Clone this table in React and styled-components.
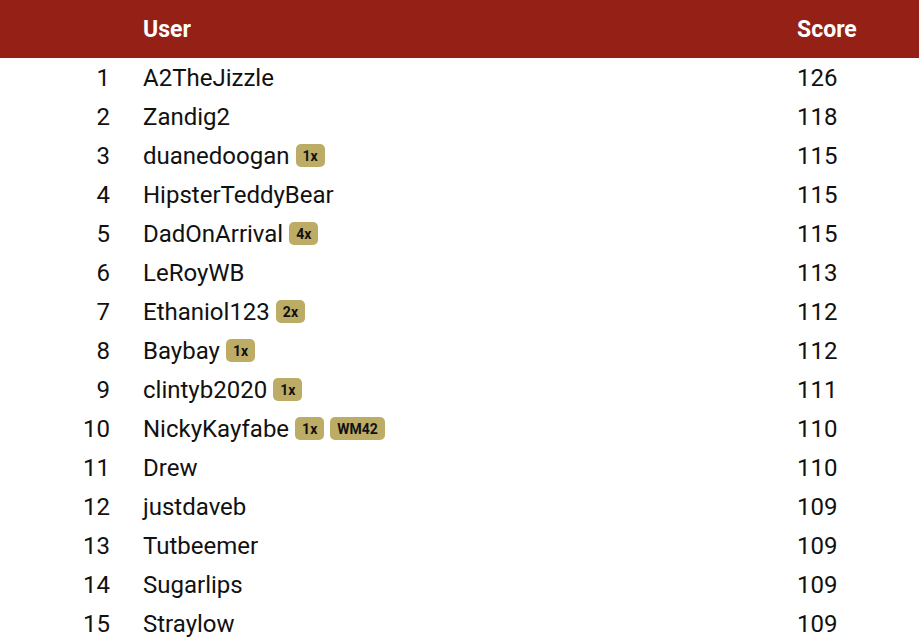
import React from "react";
import styled, { createGlobalStyle } from "styled-components";

const GlobalStyle = createGlobalStyle`
  body {
    margin: 0;
    font-family: Roboto, "Liberation Sans", sans-serif;
    background: #fff;
    color: #111;
  }
`;

const Table = styled.div`
  width: 100%;
`;

const Row = styled.div`
  display: grid;
  grid-template-columns: 111px 1fr 122px;
  column-gap: 32px;
  align-items: center;
  height: ${(p) => (p.head ? "58px" : "39px")};
  background: ${(p) => (p.head ? "#952015" : "transparent")};
  color: ${(p) => (p.head ? "#fff" : "#111")};
  font-size: ${(p) => (p.head ? "23px" : "24px")};
  font-weight: ${(p) => (p.head ? 700 : 400)};
`;

const Rank = styled.div`
  text-align: right;
  padding-right: 1px;
`;

const NameCell = styled.div`
  display: flex;
  align-items: center;
  gap: 6px;
  white-space: nowrap;
`;

const ScoreCell = styled.div``;

const Badge = styled.span`
  display: inline-flex;
  align-items: center;
  height: 23px;
  padding: 0 7px;
  border-radius: 5px;
  background: #bcac66;
  color: #111;
  font-size: 14px;
  font-weight: 700;
`;

const rows = [
  ["A2TheJizzle", 126, []],
  ["Zandig2", 118, []],
  ["duanedoogan", 115, ["1x"]],
  ["HipsterTeddyBear", 115, []],
  ["DadOnArrival", 115, ["4x"]],
  ["LeRoyWB", 113, []],
  ["Ethaniol123", 112, ["2x"]],
  ["Baybay", 112, ["1x"]],
  ["clintyb2020", 111, ["1x"]],
  ["NickyKayfabe", 110, ["1x", "WM42"]],
  ["Drew", 110, []],
  ["justdaveb", 109, []],
  ["Tutbeemer", 109, []],
  ["Sugarlips", 109, []],
  ["Straylow", 109, []],
];

export default function App() {
  return (
    <>
      <GlobalStyle />
      <Table>
        <Row head>
          <Rank />
          <NameCell>User</NameCell>
          <ScoreCell>Score</ScoreCell>
        </Row>
        {rows.map(([name, score, badges], i) => (
          <Row key={name}>
            <Rank>{i + 1}</Rank>
            <NameCell>
              {name}
              {badges.map((b) => (
                <Badge key={b}>{b}</Badge>
              ))}
            </NameCell>
            <ScoreCell>{score}</ScoreCell>
          </Row>
        ))}
      </Table>
    </>
  );
}
